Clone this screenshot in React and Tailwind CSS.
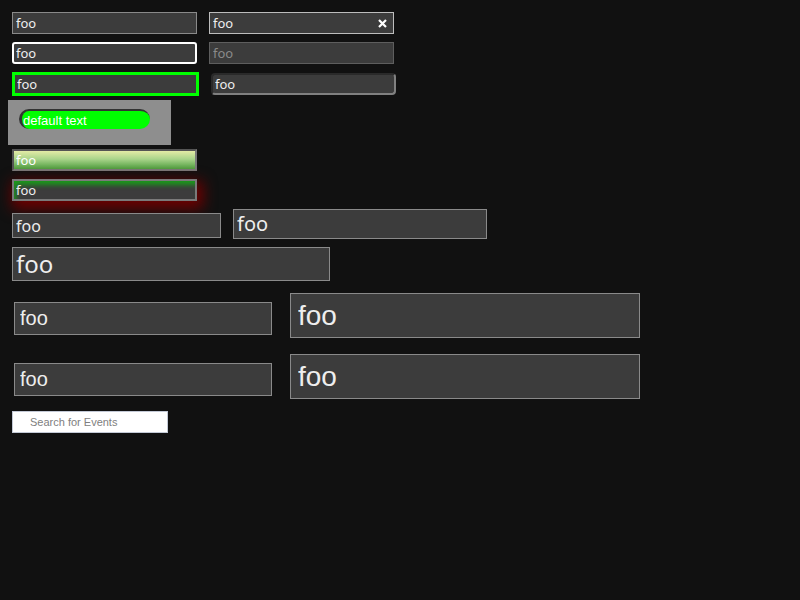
import React from "react";

function Field({ className = "", value = "foo", arial = false, ...rest }) {
  const font = arial
    ? "font-['Liberation_Sans',Arial,sans-serif]"
    : "font-['Noto_Sans',sans-serif]";
  return (
    <input
      readOnly
      defaultValue={value}
      className={`block outline-none ${font} ${className}`}
      {...rest}
    />
  );
}

export default function App() {
  return (
    <div className="min-h-screen bg-[#111111] p-3">
      <div className="flex gap-3">
        <Field className="h-[22px] w-[185px] border border-[#8a8a8a] bg-[#3c3c3c] px-[3px] text-[13px] text-[#eeeeee]" />
        <div className="relative">
          <Field className="h-[22px] w-[185px] border border-[#bdbdbd] bg-[#3c3c3c] px-[3px] text-[13px] text-[#eeeeee]" />
          <svg
            className="absolute right-[7px] top-[7px]"
            width="9"
            height="9"
            viewBox="0 0 9 9"
          >
            <path d="M1 1 L8 8 M8 1 L1 8" stroke="#ffffff" strokeWidth="2.2" />
          </svg>
        </div>
      </div>

      <div className="mt-2 flex gap-3">
        <Field className="h-[22px] w-[185px] rounded-[3px] border-2 border-white bg-[#3c3c3c] px-[2px] text-[13px] text-[#eeeeee]" />
        <Field
          disabled
          className="h-[22px] w-[185px] border border-[#5e5e5e] bg-[#3c3c3c] px-[3px] text-[13px] text-[#8a8a8a]"
        />
      </div>

      <div className="mt-2 flex items-start gap-3">
        <Field className="h-[24px] w-[187px] border-[3px] border-[#00ff00] bg-[#3c3c3c] px-[2px] text-[13px] text-[#eeeeee]" />
        <Field className="mt-px h-[22px] w-[185px] rounded-[4px] border-2 border-[#808080] border-t-[#2a2a2a] border-l-[#2a2a2a] bg-[#3c3c3c] px-[2px] text-[13px] text-[#eeeeee]" />
      </div>

      <div className="-ml-1 mt-1 w-[163px] bg-[#8e8e8e] pb-[16px] pl-[11px] pt-[9px]">
        <Field
          arial
          value="default text"
          className="h-[20px] w-[131px] rounded-[10px] border-l-[3px] border-t-[2px] border-[#333333] bg-[#00ff00] px-[1px] text-[13px] text-white"
        />
      </div>

      <Field className="mt-1 h-[22px] w-[185px] border-2 border-[#7a7a7a] border-t-[#555555] border-l-[#555555] bg-[linear-gradient(to_bottom,#e3eba6,#a9d48a_45%,#4e9d3e)] px-[2px] text-[13px] text-white" />

      <Field className="mt-2 h-[22px] w-[185px] border-2 border-[#7a7a7a] bg-[#3c3c3c] px-[2px] text-[13px] text-[#eeeeee] shadow-[inset_3px_5px_5px_-1px_#1b9a1b,3px_5px_14px_3px_#6e0000]" />

      <div className="mt-2 flex items-start gap-3">
        <Field className="mt-1 h-[25px] w-[209px] border border-[#8a8a8a] bg-[#3c3c3c] px-[3px] text-[16px] text-[#eeeeee]" />
        <Field className="h-[30px] w-[254px] border border-[#8a8a8a] bg-[#3c3c3c] px-[3px] text-[20px] text-[#eeeeee]" />
      </div>

      <Field className="mt-2 h-[34px] w-[318px] border border-[#8a8a8a] bg-[#3c3c3c] px-[3px] text-[24px] text-[#eeeeee]" />

      <div className="mt-3 flex items-start">
        <Field arial className="ml-[2px] mt-[9px] h-[33px] w-[258px] border border-[#8a8a8a] bg-[#3c3c3c] px-[5px] text-[20px] text-[#eeeeee]" />
        <Field arial className="ml-[18px] h-[45px] w-[350px] border border-[#8a8a8a] bg-[#3c3c3c] px-[7px] text-[28px] text-[#eeeeee]" />
      </div>

      <div className="mt-4 flex items-start">
        <Field arial className="ml-[2px] mt-[9px] h-[33px] w-[258px] border border-[#8a8a8a] bg-[#3c3c3c] px-[5px] text-[20px] text-[#eeeeee]" />
        <Field arial className="ml-[18px] h-[45px] w-[350px] border border-[#8a8a8a] bg-[#3c3c3c] px-[7px] text-[28px] text-[#eeeeee]" />
      </div>

      <input
        readOnly
        placeholder="Search for Events"
        className="mt-3 block h-[22px] w-[156px] border border-[#c3c9d6] bg-white pl-[17px] text-[11px] text-[#333] outline-none placeholder:text-[#808080] font-['Liberation_Sans',Arial,sans-serif]"
      />
    </div>
  );
}
